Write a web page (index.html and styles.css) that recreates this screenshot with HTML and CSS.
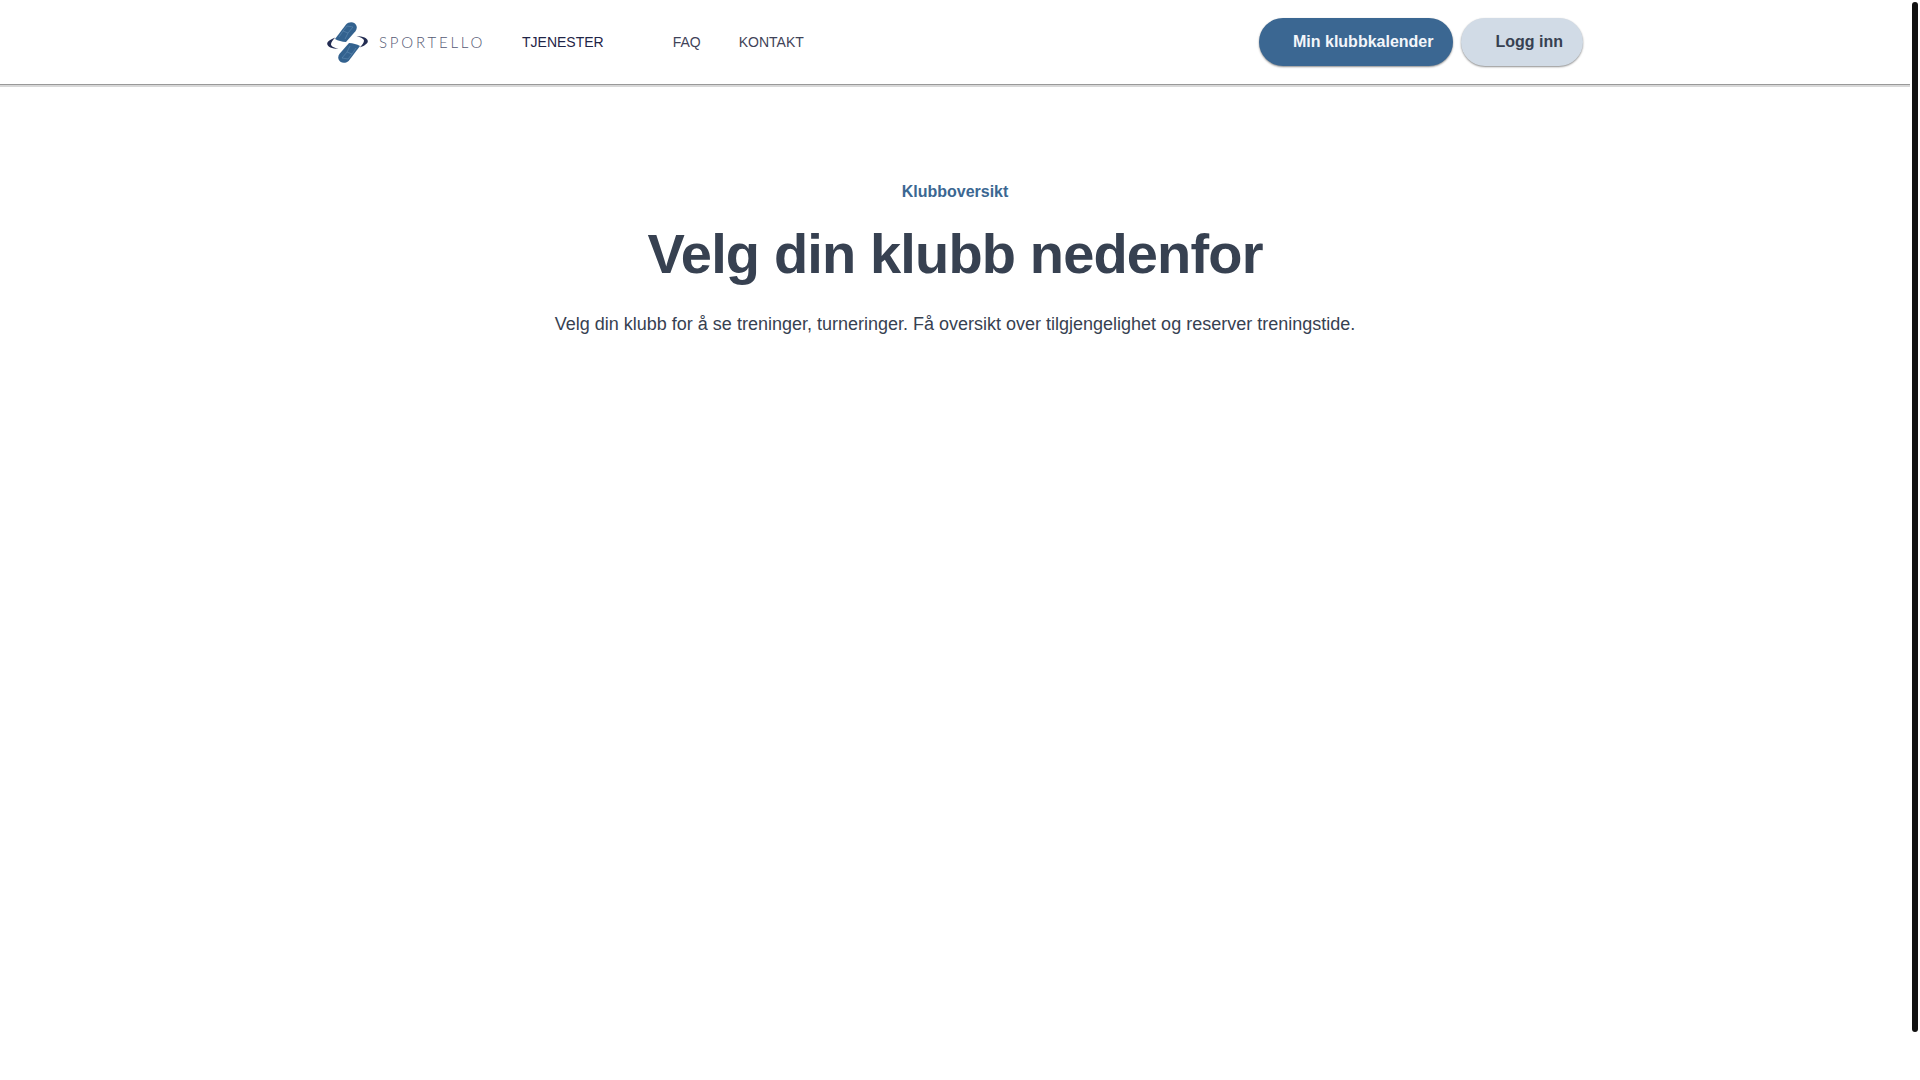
FILE: index.html
```html
<!DOCTYPE html>
<html lang="no">
<head>
<meta charset="utf-8">
<title>Sportello</title>
<link rel="stylesheet" href="styles.css">
</head>
<body>
<div class="app">
  <header class="header">
    <div class="header-inner">
      <a class="logo" href="#">
        <svg class="logo-mark" width="41" height="41" viewBox="0 0 41 41" aria-hidden="true">
          <g>
            <path class="mark-blue" d="M8 17 L19 2.6 C21 0.2 25 -0.6 27.6 1.3 C30.2 3.3 30.4 6.8 28.4 9.3 L19 20 C15 19.8 11 18.8 8 17 Z"/>
            <path class="mark-line" d="M12 15 L16 9 L21 11 L18 17 M16 9 L20 4 L26 5 L21 11"/>
            <path class="mark-dark" d="M8.3 15.5 C3.5 17.3 0.2 19.4 0.2 21.8 C0.2 24.8 5 26.8 11.5 27 C7.5 25.8 4 24.4 4 22.2 C4 20.2 6 17.8 8.3 15.5 Z"/>
          </g>
          <g transform="rotate(180 20.5 20.5)">
            <path class="mark-blue" d="M8 17 L19 2.6 C21 0.2 25 -0.6 27.6 1.3 C30.2 3.3 30.4 6.8 28.4 9.3 L19 20 C15 19.8 11 18.8 8 17 Z"/>
            <path class="mark-line" d="M12 15 L16 9 L21 11 L18 17 M16 9 L20 4 L26 5 L21 11"/>
            <path class="mark-dark" d="M8.3 15.5 C3.5 17.3 0.2 19.4 0.2 21.8 C0.2 24.8 5 26.8 11.5 27 C7.5 25.8 4 24.4 4 22.2 C4 20.2 6 17.8 8.3 15.5 Z"/>
          </g>
        </svg>
        <span class="logo-text">SPORTELLO</span>
      </a>
      <nav class="nav">
        <a class="nav-link nav-link-active nav-services" href="#">TJENESTER</a>
        <a class="nav-link nav-faq" href="#">FAQ</a>
        <a class="nav-link" href="#">KONTAKT</a>
      </nav>
      <div class="actions">
        <a class="btn btn-primary" href="#">Min klubbkalender</a>
        <a class="btn btn-secondary" href="#">Logg inn</a>
      </div>
    </div>
  </header>
  <main class="main">
    <p class="kicker">Klubboversikt</p>
    <h1 class="title">Velg din klubb nedenfor</h1>
    <p class="lead">Velg din klubb for å se treninger, turneringer. Få oversikt over tilgjengelighet og reserver treningstide.</p>
  </main>
</div>
<div class="scrollbar" aria-hidden="true"></div>
</body>
</html>
```
FILE: styles.css
```css
* { box-sizing: border-box; }
html, body { margin: 0; height: 100%; overflow: hidden; background: #fff; }
body { font-family: "Liberation Sans", Arial, sans-serif; }
a { text-decoration: none; }

.app { width: 1910px; }

.header {
  height: 85px;
  border-bottom: 1px solid #999;
  box-shadow: 0 2px 0 #d8d8d8;
  background: #fff;
}
.header-inner {
  width: 1256px;
  height: 84px;
  margin: 0 auto;
  display: flex;
  align-items: center;
}

.logo { display: flex; align-items: center; width: 195px; }
.logo-mark { flex: none; }
.mark-blue { fill: #33628f; }
.mark-line { fill: none; stroke: #5f8bb2; stroke-width: 0.6; }
.mark-dark { fill: #232c52; }
.logo-text {
  margin-left: 11px;
  font-family: Lato, sans-serif;
  font-weight: 300;
  font-size: 15px;
  letter-spacing: 2.8px;
  color: #555a75;
}

.nav { display: flex; align-items: center; }
.nav-link { font-size: 14px; color: #3f4358; }
.nav-link-active { color: #1f2547; }
.nav-services { margin-right: 69px; }
.nav-faq { margin-right: 38px; }

.actions { margin-left: auto; display: flex; gap: 8px; }
.btn {
  height: 48px;
  display: flex;
  align-items: center;
  padding: 0 20px 0 34px;
  border-radius: 24px;
  font-weight: 700;
  font-size: 16px;
  box-shadow: 0 1px 2px rgba(0, 0, 0, 0.45);
}
.btn-primary { background: #3b6792; color: #f3f6fa; }
.btn-secondary { background: #d1dbe6; color: #374151; }

.main {
  padding-top: 95px;
  text-align: center;
}
.kicker {
  margin: 0;
  font-weight: 700;
  font-size: 16px;
  line-height: 24px;
  color: #3b6792;
}
.title {
  margin: 18px 0 0;
  font-weight: 700;
  font-size: 56px;
  line-height: 64px;
  letter-spacing: -0.85px;
  color: #374151;
}
.lead {
  margin: 24px 0 0;
  font-size: 18px;
  line-height: 28px;
  color: #374151;
}

.scrollbar {
  position: fixed;
  left: 1912px;
  top: 2px;
  width: 6px;
  height: 1030px;
  border-radius: 3px;
  background: #111;
}
```
